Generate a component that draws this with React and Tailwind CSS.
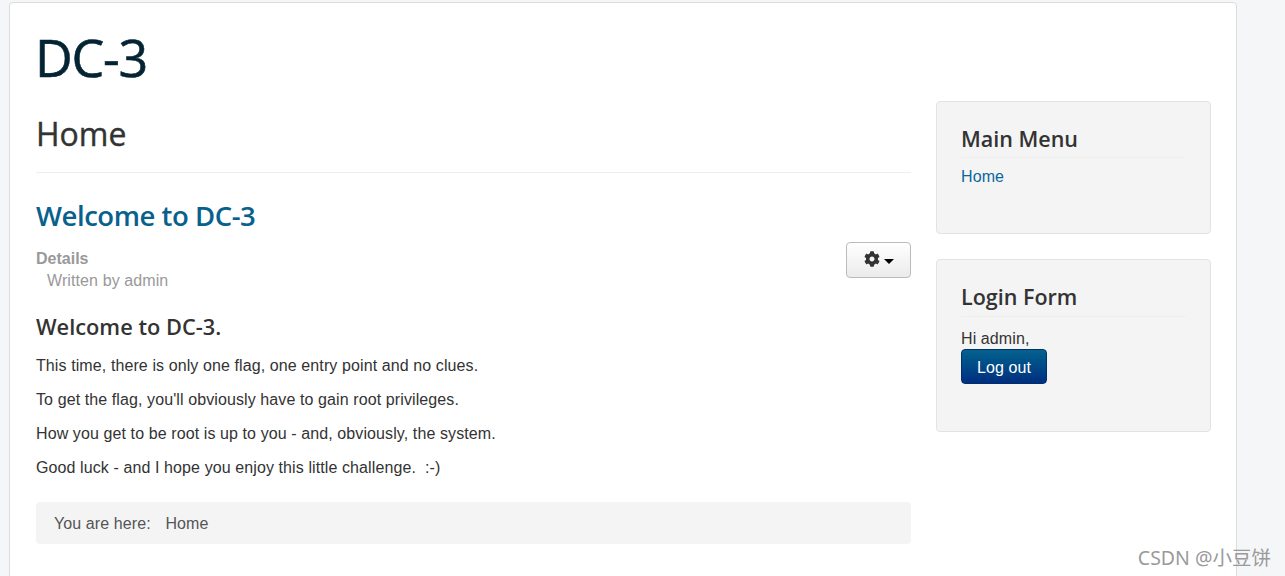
import React from "react";
import { FaCog } from "react-icons/fa";

const heading = "font-['Open_Sans',sans-serif] text-[#333]";

function Module({ title, children, className, titleClassName }) {
  return (
    <div className={`rounded border border-[#e3e3e3] bg-[#f4f4f5] px-6 pt-[20px] ${className}`}>
      <h3 className={`${heading} text-[21.5px] font-semibold leading-[34px] border-b border-[#eee] tracking-normal ${titleClassName}`}>{title}</h3>
      {children}
    </div>
  );
}

export default function App() {
  return (
    <div className="relative h-[576px] overflow-hidden bg-[#f4f6f8] font-['Liberation_Sans',sans-serif] text-base tracking-[0.1px] text-[#333]">
      <div className="ml-[9px] mt-0.5 h-[600px] w-[1228px] rounded border border-[#dcdcdc] bg-white pl-[26px] pr-[25px] pt-[20px]">
        <h1 className="-ml-px font-['Open_Sans',sans-serif] text-[52px] leading-[68px] font-normal text-[#052433] tracking-[-1.2px] [-webkit-text-stroke:0.6px_#052433]">DC-3</h1>

        <div className="mt-[10px] flex gap-[25px]">
          {/* Main column */}
          <div className="w-[875px] pt-[7px]">
            <h2 className={`${heading} text-[32px] leading-[52px] font-normal border-b border-[#eee] pb-3 tracking-normal [-webkit-text-stroke:0.4px_#333]`}>Home</h2>
            <h2 className="mt-[19px] font-['Open_Sans',sans-serif] text-[27.5px] leading-[48px] font-semibold text-[#08618d] tracking-[-0.45px]">Welcome to DC-3</h2>

            <div className="mt-0.5 flex items-start justify-between">
              <div className="pt-1.5 text-[#999]">
                <div className="font-bold leading-[22px] tracking-normal">Details</div>
                <div className="pl-[11px] leading-[22px]">Written by admin</div>
              </div>
              <button className="flex h-9 w-[65px] items-center justify-center gap-1 rounded border border-[#bbb] bg-gradient-to-b from-white to-[#ebebeb] text-[#333]">
                <FaCog className="mb-0.5 size-4" />
                <span className="mt-0.5 border-x-[5px] border-t-[5px] border-x-transparent border-t-black" />
              </button>
            </div>

            <h3 className={`${heading} mt-[16px] text-[21.8px] leading-[38px] font-semibold tracking-normal`}>Welcome to DC-3.</h3>
            <p className="mt-[9px] leading-[22px]">This time, there is only one flag, one entry point and no clues.</p>
            <p className="mt-3 leading-[22px]">To get the flag, you'll obviously have to gain root privileges.</p>
            <p className="mt-3 leading-[22px]">How you get to be root is up to you - and, obviously, the system.</p>
            <p className="mt-3 leading-[22px] whitespace-pre">Good luck - and I hope you enjoy this little challenge.  :-)</p>

            <div className="mt-[23px] flex h-[42px] items-center rounded bg-[#f4f4f5] pl-[18px] pt-0.5 text-[#555] whitespace-pre">
              <span>You are here:   </span>
              <span className="ml-px">Home</span>
            </div>
          </div>

          {/* Sidebar */}
          <div className="w-[275px]">
            <Module title="Main Menu" className="h-[133px]" titleClassName="pb-px">
              <a className="mt-2 block leading-[22px] text-[#0a679a]">Home</a>
            </Module>
            <Module title="Login Form" className="mt-[25px] h-[173px]" titleClassName="pb-[2px]">
              <div className="mt-3 leading-[20px]">Hi admin,</div>
              <button className="block h-[35px] w-[86px] rounded border border-[#002f6c] bg-gradient-to-b from-[#08618d] to-[#002e80] pt-0.5 text-white">Log out</button>
            </Module>
          </div>
        </div>
      </div>

      <div className="absolute right-[14px] top-[546px] font-['Noto_Sans','Noto_Sans_CJK_SC',sans-serif] text-[19.5px] leading-6 tracking-normal text-[#9a9a9a]">CSDN @小豆饼</div>
    </div>
  );
}
